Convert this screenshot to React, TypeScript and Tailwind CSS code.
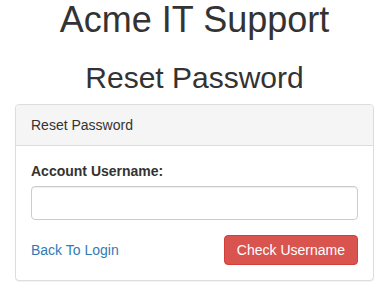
import React from 'react';

export default function App() {
  const [username, setUsername] = React.useState('');

  return (
    <div className="min-h-[294px] bg-white pl-[15px] pr-[12px] text-[14px] leading-[20px] text-[#333333] font-['Liberation_Sans',Arial,sans-serif]">
      <h1 className="text-center text-[36px] leading-[40px] font-normal">Acme IT Support</h1>
      <h2 className="mt-[21px] mb-[10px] text-center text-[30px] leading-[33px] font-normal">Reset Password</h2>

      <div className="rounded-[4px] border border-[#dddddd] bg-white shadow-[0_1px_1px_rgba(0,0,0,0.05)]">
        <div className="rounded-t-[3px] border-b border-[#dddddd] bg-[#f5f5f5] px-[15px] py-[10px]">
          Reset Password
        </div>
        <div className="p-[15px]">
          <label htmlFor="username" className="mb-[5px] block font-bold">
            Account Username:
          </label>
          <input
            id="username"
            type="text"
            value={username}
            onChange={(e) => setUsername(e.target.value)}
            className="block h-[34px] w-full rounded-[4px] border border-[#cccccc] px-[12px] py-[6px] shadow-[inset_0_1px_1px_rgba(0,0,0,0.075)] outline-none"
          />
          <div className="mt-[15px] flex items-center justify-between">
            <a href="#" className="text-[#337ab7]">
              Back To Login
            </a>
            <button
              type="button"
              className="h-[30px] rounded-[4px] border border-[#d43f3a] bg-[#d9534f] px-[12px] text-white"
            >
              Check Username
            </button>
          </div>
        </div>
      </div>
    </div>
  );
}
